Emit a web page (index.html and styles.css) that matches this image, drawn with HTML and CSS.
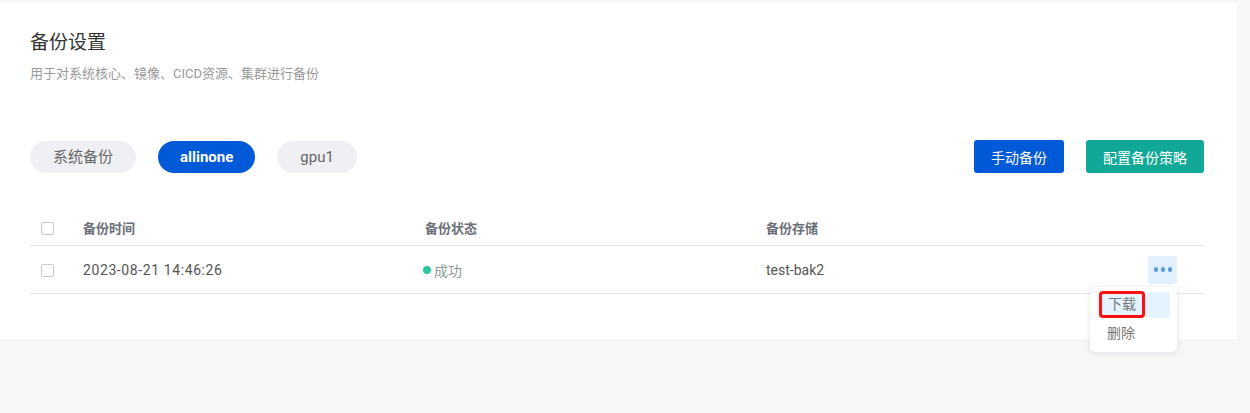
FILE: index.html
```html
<!DOCTYPE html>
<html lang="zh-CN">
<head>
  <meta charset="UTF-8" />
  <title>备份设置</title>
  <link rel="stylesheet" href="styles.css">
</head>
<body>
  <div class="page">
    <div class="card">
      <h1 class="title">备份设置</h1>
      <p class="subtitle">用于对系统核心、镜像、CICD资源、集群进行备份</p>

      <div class="toolbar">
        <div class="tabs">
          <span class="tab">系统备份</span>
          <span class="tab active">allinone</span>
          <span class="tab">gpu1</span>
        </div>
        <div class="actions">
          <button class="btn btn-blue">手动备份</button>
          <button class="btn btn-teal">配置备份策略</button>
        </div>
      </div>

      <div class="table">
        <div class="tr th">
          <div class="cell-check"><span class="checkbox"></span></div>
          <div>备份时间</div>
          <div>备份状态</div>
          <div>备份存储</div>
          <div></div>
        </div>
        <div class="tr">
          <div class="cell-check"><span class="checkbox"></span></div>
          <div class="time">2023-08-21 14:46:26</div>
          <div class="status"><span class="dot"></span>成功</div>
          <div>test-bak2</div>
          <div class="cell-op">
            <span class="more"><i></i><i></i><i></i></span>
            <div class="menu">
              <div class="menu-item hover"><span class="mark">下载</span></div>
              <div class="menu-item">删除</div>
            </div>
          </div>
        </div>
      </div>
    </div>
  </div>
</body>
</html>
```

FILE: styles.css
```css
body {
  margin: 0;
  font-family: Roboto, "Noto Sans CJK SC", sans-serif;
  background: #f7f7f8;
}

.page {
  padding-top: 3px;
  min-height: 410px;
}

.card {
  width: 1237px;
  box-sizing: border-box;
  background: #fff;
  padding: 27px 33px 45px 30px;
}

.title {
  margin: 0;
  font-size: 19px;
  line-height: 26px;
  font-weight: normal;
  color: #333;
}

.subtitle {
  margin: 9px 0 0;
  font-size: 13px;
  line-height: 18px;
  color: #999;
}

.toolbar {
  display: flex;
  justify-content: space-between;
  align-items: center;
  margin-top: 57px;
  height: 33px;
}

.tabs,
.actions {
  display: flex;
  gap: 22px;
}

.tab {
  height: 32px;
  line-height: 32px;
  padding: 0 23px;
  border-radius: 16px;
  background: #eff0f4;
  color: #666;
  font-size: 15px;
}

.tab.active {
  padding: 0 22px;
  background: #0059d6;
  color: #fff;
  font-weight: bold;
}

.btn {
  height: 33px;
  padding: 0 17px;
  border: none;
  border-radius: 3px;
  color: #fff;
  font-family: inherit;
  font-size: 14px;
}

.btn-blue { background: #0059d6; }
.btn-teal { background: #11a897; }

.table {
  margin-top: 36px;
}

.tr {
  display: grid;
  grid-template-columns: 53px 342px 341px 1fr 60px;
  align-items: center;
  height: 47px;
  border-bottom: 1px solid #e4e6ea;
  font-size: 14px;
  color: #555;
}

.tr.th {
  height: 36px;
  font-size: 13px;
  font-weight: bold;
  color: #6b6f78;
}

.time {
  letter-spacing: 0.6px;
}

.cell-check {
  padding-left: 11px;
  display: flex;
  padding-top: 2px;
}

.checkbox {
  width: 11px;
  height: 11px;
  border: 1px solid #c6c9cf;
  border-radius: 2px;
  background: #fff;
}

.status {
  display: flex;
  align-items: center;
  color: #8c9a98;
  margin-left: -2px;
}

.dot {
  width: 8px;
  height: 8px;
  border-radius: 50%;
  background: #2ec7a0;
  margin-right: 3px;
}

.cell-op {
  position: relative;
  height: 100%;
  display: flex;
  align-items: center;
}

.more {
  display: flex;
  align-items: center;
  justify-content: center;
  gap: 3px;
  width: 29px;
  height: 28px;
  margin-left: 4px;
  background: #e3f0fd;
  border-radius: 3px;
}

.more i {
  width: 4px;
  height: 5px;
  border-radius: 2px;
  background: #5a9be6;
}

.menu {
  position: absolute;
  top: 41px;
  left: -54px;
  width: 87px;
  box-sizing: border-box;
  padding: 5px 7px 6px;
  background: #fff;
  border-radius: 5px;
  box-shadow: 0 1px 6px rgba(40, 50, 70, 0.12);
  z-index: 2;
}

.menu-item {
  height: 26px;
  line-height: 26px;
  padding-left: 10px;
  font-size: 14px;
  color: #777;
  border-radius: 2px;
}

.menu-item + .menu-item {
  margin-top: 2px;
}

.menu-item.hover {
  background: #e4f3fd;
  padding-left: 2px;
}

.mark {
  display: inline-block;
  height: 21px;
  line-height: 21px;
  padding: 0 6px;
  margin-top: -1px;
  vertical-align: top;
  border: 3px solid #ff1010;
  border-radius: 4px;
}
```
